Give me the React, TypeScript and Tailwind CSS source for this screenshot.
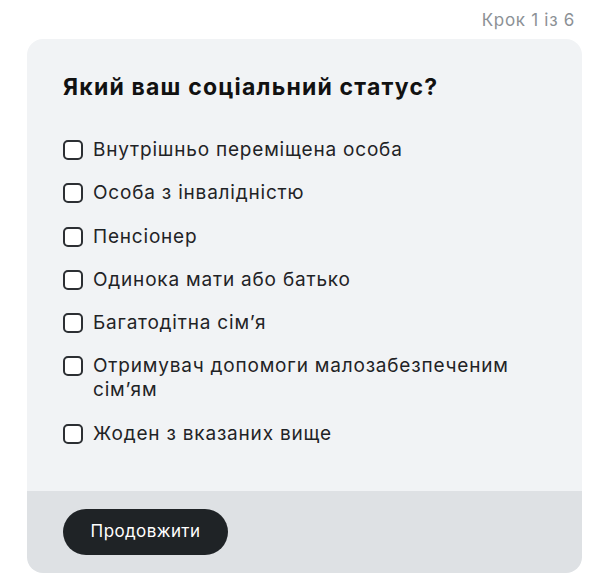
import { useState } from 'react';

const options = [
  'Внутрішньо переміщена особа',
  'Особа з інвалідністю',
  'Пенсіонер',
  'Одинока мати або батько',
  'Багатодітна сім’я',
  'Отримувач допомоги малозабезпеченим сім’ям',
  'Жоден з вказаних вище',
];

export default function App() {
  const [checked, setChecked] = useState<string[]>([]);

  const toggle = (o: string) =>
    setChecked((c) => (c.includes(o) ? c.filter((x) => x !== o) : [...c, o]));

  return (
    <div className="min-h-[583px] w-[591px] bg-white font-['Inter',sans-serif]">
      <div className="flex justify-end pr-4 pt-[8px] text-[17px] leading-6 tracking-[0.7px] text-[#8c9196]">
        Крок 1 із 6
      </div>
      <div className="ml-[27px] mt-[7px] w-[555px] overflow-hidden rounded-2xl">
        <div className="bg-[#f1f3f5] pb-[45px] pl-[36px] pr-8 pt-[34px]">
          <h1 className="text-[23px] font-bold leading-7 tracking-[1.2px] text-[#111]">
            Який ваш соціальний статус?
          </h1>
          <div className="mt-[37px] flex flex-col gap-[19.3px]">
            {options.map((o) => (
              <label key={o} className="flex cursor-pointer items-start gap-[10px]">
                <span
                  onClick={() => toggle(o)}
                  className={`mt-[2px] h-5 w-5 shrink-0 rounded-[5px] border-2 border-[#2c2f33] ${
                    checked.includes(o) ? 'bg-[#2c2f33]' : 'bg-white'
                  }`}
                />
                <span className="max-w-[430px] text-[19px] leading-6 tracking-[0.8px] text-[#1f2326]">
                  {o}
                </span>
              </label>
            ))}
          </div>
        </div>
        <div className="bg-[#dee1e4] py-[18px] pl-[36px]">
          <button className="h-[46px] w-[165px] rounded-full bg-[#1f2326] text-[17px] tracking-[0.4px] text-white">
            Продовжити
          </button>
        </div>
      </div>
    </div>
  );
}
